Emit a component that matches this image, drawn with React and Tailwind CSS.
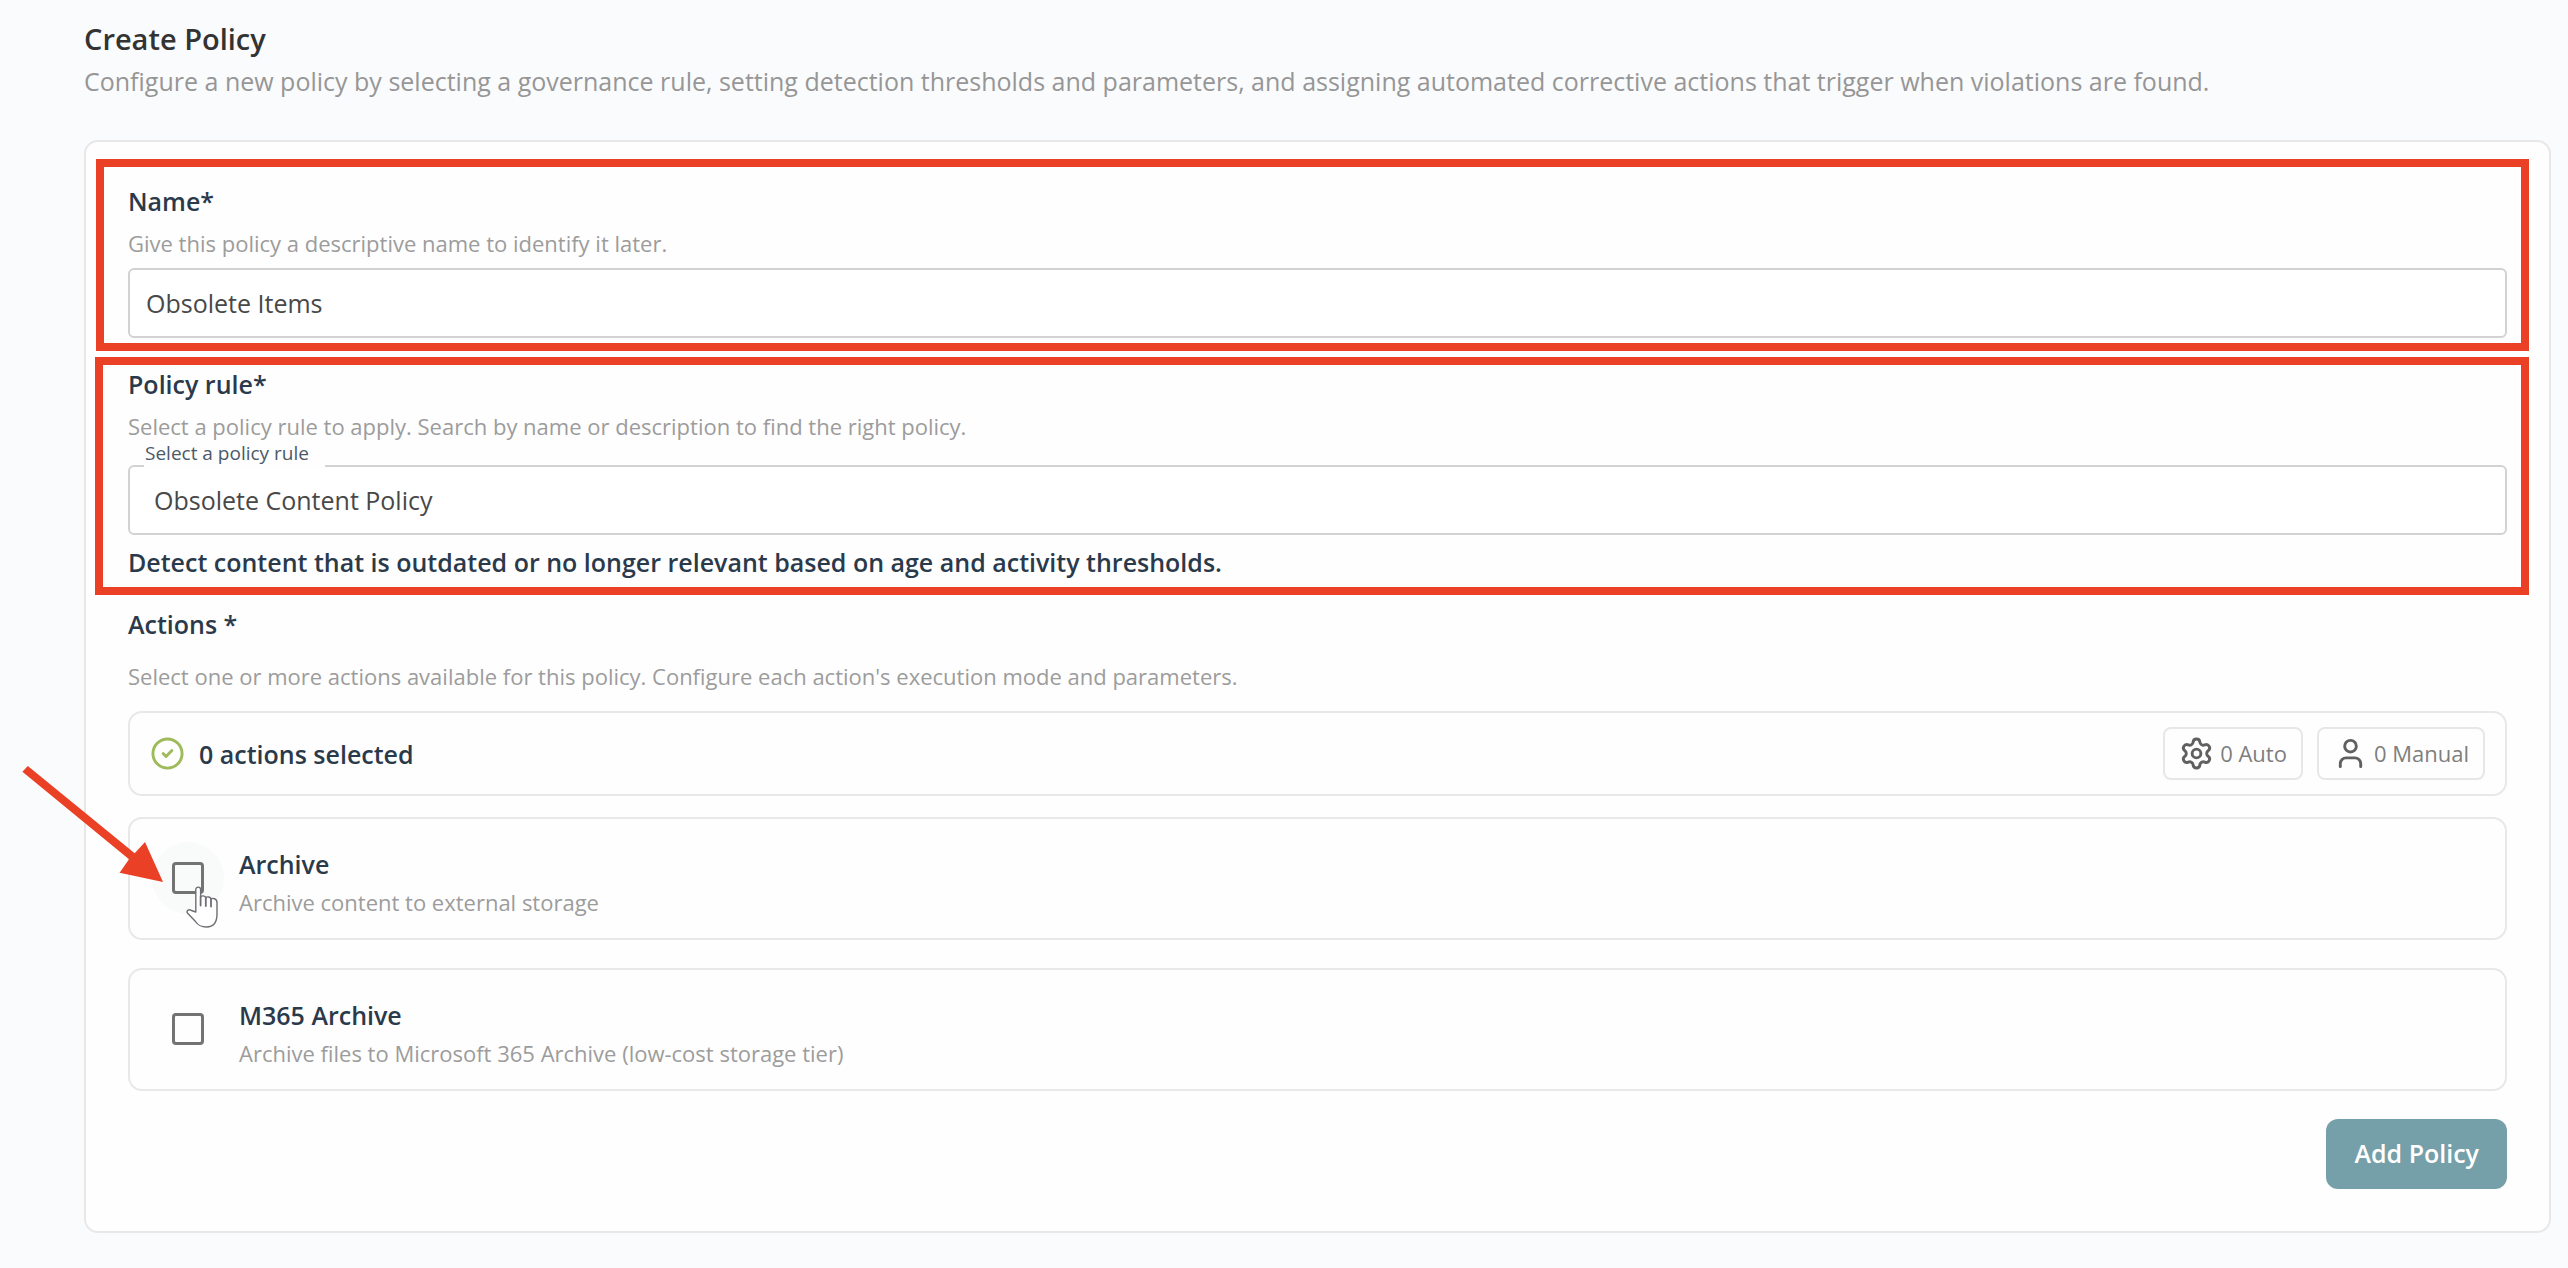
// App.jsx
// ============================================================
// Create Policy form: name, policy rule and corrective actions
// ============================================================

import { useState } from 'react';
import { CircleCheck, Settings, User } from 'lucide-react';

const ACTIONS = [
  {
    id: 'archive',
    title: 'Archive',
    text: 'Archive content to external storage',
    pointed: true,
  },
  {
    id: 'm365-archive',
    title: 'M365 Archive',
    text: 'Archive files to Microsoft 365 Archive (low-cost storage tier)',
  },
];

const labelClass = 'block text-[25px] leading-8 font-semibold text-[#2b3a4b]';
const hintClass = 'text-[22px] leading-8 text-[#9c9c9c]';
const inputClass =
  'block h-[70px] w-full rounded-md border-2 border-[#d2d2d2] bg-white text-[25px] text-[#484848] outline-none';

// Red frame drawn over a form section
function Highlight({ className }) {
  return (
    <div className={`pointer-events-none absolute border-8 border-[#ea4025] ${className}`} />
  );
}

function Arrow() {
  return (
    <svg
      viewBox="0 0 142 118"
      className="pointer-events-none absolute -top-[54px] -left-[108px] h-[118px] w-[142px]"
      fill="#ea4025"
    >
      <polygon points="5.8,1 112.7,88.3 123,77 141,117 97.6,107.7 107,94.3 0.4,6.7" />
    </svg>
  );
}

function HandPointer() {
  return (
    <svg
      viewBox="0 0 32 42"
      className="pointer-events-none absolute top-11 left-[34px] h-[42px] w-8"
      fill="#fff"
      stroke="#6e6e74"
      strokeWidth="1.4"
      strokeLinecap="round"
      strokeLinejoin="round"
    >
      <path d="M9.8 26V3.4C9.8 .4 14.6 .4 14.6 3.4V11c.8-1.7 4.6-1.5 5.2.8 1-1.5 4.7-1 5.2 1.2 1.4-1.2 6-.6 6 3.5v11.5c0 8-3.5 13-10.5 13-5.5 0-8.7-1.8-11-5.5L1.4 27c-1.2-2.4 1.6-4.2 4-2.5z" />
      <path d="M14.6 11v8.5M19.8 12v8M25 13.5v7" fill="none" strokeWidth="1.8" />
    </svg>
  );
}

function CountChip({ icon: Icon, children }) {
  return (
    <span className="flex h-[53px] items-center gap-1.5 rounded-lg border-2 border-[#e7e7e7] px-3.5 text-[22px] text-[#7e7e7e]">
      <Icon size={35} strokeWidth={2} className="text-[#606060]" />
      {children}
    </span>
  );
}

function ActionCard({ action, checked, onToggle }) {
  return (
    <div className="relative flex items-start rounded-[14px] border-2 border-[#e8e8e8] pt-[29px] pr-6 pb-5 pl-[22px]">
      <div
        className={`relative -mt-1.5 flex size-[72px] shrink-0 items-center justify-center rounded-full ${
          action.pointed ? 'bg-[#f9fafa]' : ''
        }`}
      >
        <input
          id={action.id}
          type="checkbox"
          checked={checked}
          onChange={onToggle}
          className="size-8 appearance-none rounded-sm border-3 border-[#737373] checked:bg-[#76a0a9]"
        />
        {action.pointed && <HandPointer />}
      </div>

      <div className="ml-[15px]">
        <label htmlFor={action.id} className={labelClass}>{action.title}</label>
        <p className={`mt-1.5 ${hintClass}`}>{action.text}</p>
      </div>

      {action.pointed && <Arrow />}
    </div>
  );
}

export default function App() {
  const [name, setName] = useState('Obsolete Items');
  const [rule, setRule] = useState('Obsolete Content Policy');
  const [selected, setSelected] = useState([]);

  const toggle = (id) =>
    setSelected((prev) => (prev.includes(id) ? prev.filter((x) => x !== id) : [...prev, id]));

  return (
    <main className="min-h-screen bg-[#fafbfd] pt-[19px] pr-[17px] pb-[35px] pl-[84px] font-['Open_Sans',sans-serif]">
      {/* ── Page heading ── */}
      <h1 className="text-[29px] leading-10 font-semibold text-[#333]">Create Policy</h1>
      <p className="mt-1 text-[25px] leading-9 text-[#969696]">
        Configure a new policy by selecting a governance rule, setting detection thresholds and
        parameters, and assigning automated corrective actions that trigger when violations are found.
      </p>

      <form
        onSubmit={(e) => e.preventDefault()}
        className="mt-[41px] rounded-[14px] border-2 border-[#e8e8e8] bg-[#fefefe] px-[42px] pt-[43px] pb-[42px]"
      >
        {/* ── Name ── */}
        <section className="relative">
          <label htmlFor="policy-name" className={labelClass}>Name*</label>
          <p className={`mt-2.5 ${hintClass}`}>Give this policy a descriptive name to identify it later.</p>
          <input
            id="policy-name"
            type="text"
            value={name}
            onChange={(e) => setName(e.target.value)}
            className={`mt-[9px] px-4 ${inputClass}`}
          />
          <Highlight className="-top-[26px] -right-[22px] -bottom-[13px] -left-8" />
        </section>

        {/* ── Policy rule ── */}
        <section className="relative mt-[30px]">
          <h2 className={labelClass}>Policy rule*</h2>
          <p className={`mt-2.5 ${hintClass}`}>
            Select a policy rule to apply. Search by name or description to find the right policy.
          </p>
          <div className="relative mt-[23px]">
            <label
              htmlFor="policy-rule"
              className="absolute -top-6 left-4 h-7 bg-[#fefefe] pr-4 pl-px text-[19px] leading-6 text-[#4c5968]"
            >
              Select a policy rule
            </label>
            <input
              id="policy-rule"
              type="text"
              value={rule}
              onChange={(e) => setRule(e.target.value)}
              className={`px-6 ${inputClass}`}
            />
          </div>
          <p className={`mt-[11px] ${labelClass}`}>
            Detect content that is outdated or no longer relevant based on age and activity thresholds.
          </p>
          <Highlight className="-top-[11px] -right-[22px] -bottom-[17px] -left-[33px]" />
        </section>

        {/* ── Actions ── */}
        <section className="mt-[30px]">
          <h2 className={labelClass}>Actions *</h2>
          <p className={`mt-5 ${hintClass}`}>
            Select one or more actions available for this policy. Configure each action's execution mode and parameters.
          </p>

          <div className="mt-[19px] flex h-[85px] items-center justify-between rounded-[14px] border-2 border-[#e8e8e8] px-5">
            <div className="flex items-center gap-3.5">
              <CircleCheck size={35} strokeWidth={2} className="text-[#9fba5a]" />
              <span className={labelClass}>{selected.length} actions selected</span>
            </div>
            <div className="flex items-center gap-3.5">
              <CountChip icon={Settings}>0 Auto</CountChip>
              <CountChip icon={User}>0 Manual</CountChip>
            </div>
          </div>

          <div className="mt-[21px] flex flex-col gap-7">
            {ACTIONS.map((action) => (
              <ActionCard
                key={action.id}
                action={action}
                checked={selected.includes(action.id)}
                onToggle={() => toggle(action.id)}
              />
            ))}
          </div>
        </section>

        <div className="mt-7 flex justify-end">
          <button
            type="submit"
            className="h-[70px] rounded-xl bg-[#76a0a9] px-7 text-[25px] font-semibold text-white"
          >
            Add Policy
          </button>
        </div>
      </form>
    </main>
  );
}
